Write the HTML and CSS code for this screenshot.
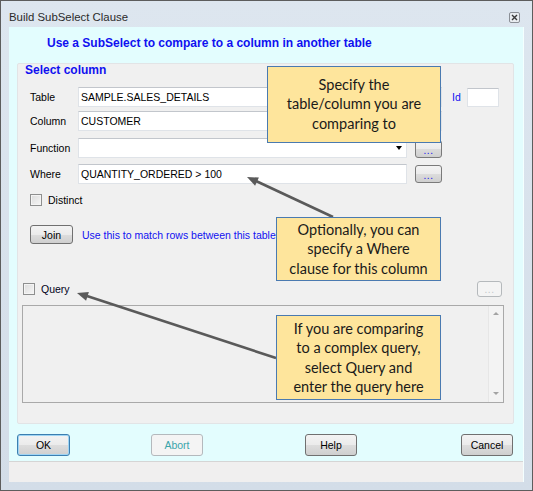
FILE: index.html
```html
<!DOCTYPE html>
<html>
<head>
<meta charset="utf-8">
<title>Build SubSelect Clause</title>
<link rel="stylesheet" href="styles.css">
</head>
<body>
<div class="window">
  <div class="titlebar">
    <span class="title">Build SubSelect Clause</span>
    <span class="close">
      <svg width="11" height="11" viewBox="0 0 11 11">
        <rect x="0.5" y="0.5" width="10" height="10" rx="1.5" fill="#e9edf1" stroke="#8a8f96"/>
        <path d="M3 3 L8 8 M8 3 L3 8" stroke="#3a3a3a" stroke-width="1.4"/>
      </svg>
    </span>
  </div>
  <div class="client">
    <div class="heading">Use a SubSelect to compare to a column in another table</div>
    <div class="panel">
      <div class="legend">Select column</div>
      <div class="row r-table">
        <span class="lbl">Table</span>
        <div class="field wide">SAMPLE.SALES_DETAILS</div>
        <span class="lbl-id">Id</span>
        <div class="field idf"></div>
      </div>
      <div class="row r-column">
        <span class="lbl">Column</span>
        <div class="field wide">CUSTOMER</div>
      </div>
      <div class="row r-function">
        <span class="lbl">Function</span>
        <div class="field combo"><span class="dd"></span></div>
        <div class="dots fdots">...</div>
      </div>
      <div class="row r-where">
        <span class="lbl">Where</span>
        <div class="field narrow">QUANTITY_ORDERED &gt; 100</div>
        <div class="dots">...</div>
      </div>
      <div class="row r-distinct">
        <span class="chk"></span><span class="chklbl">Distinct</span>
      </div>
      <div class="row r-join">
        <div class="btn join">Join</div>
        <span class="hint">Use this to match rows between this table</span>
      </div>
      <div class="row r-query">
        <span class="chk"></span><span class="chklbl">Query</span>
        <div class="dots qdots">...</div>
      </div>
      <div class="querybox">
        <div class="qarea"></div>
        <div class="vscroll"><span class="arr up"></span><span class="arr down"></span></div>
      </div>
    </div>
    <div class="buttons">
      <div class="btn ok">OK</div>
      <div class="btn abort">Abort</div>
      <div class="btn help">Help</div>
      <div class="btn cancel">Cancel</div>
    </div>
    <div class="status"></div>
  </div>

  <svg class="arrows" width="533" height="491" viewBox="0 0 533 491">
    <line x1="333" y1="217" x2="256" y2="181" stroke="#5a5a5a" stroke-width="2.6"/>
    <polygon points="247,177 255.1,185.7 258.9,177.5" fill="#5a5a5a"/>
    <line x1="276" y1="358" x2="87" y2="296" stroke="#5a5a5a" stroke-width="2.6"/>
    <polygon points="77,293 86.1,300.7 88.9,292.1" fill="#5a5a5a"/>
  </svg>

  <div class="callout c1">Specify the<br>table/column you are<br>comparing to</div>
  <div class="callout c2">Optionally, you can<br>specify a Where<br>clause for this column</div>
  <div class="callout c3">If you are comparing<br>to a complex query,<br>select Query and<br>enter the query here</div>
</div>
</body>
</html>
```

FILE: styles.css
```css
html, body {
  margin: 0;
  padding: 0;
  background: #ffffff;
}

body {
  font-family: "Liberation Sans", Arial, sans-serif;
  font-size: 10.5px;
  color: #000;
}

.window {
  position: relative;
  width: 533px;
  height: 491px;
  box-sizing: border-box;
  border: 1px solid #5d5d5d;
  background: linear-gradient(#dde6ef, #d3dde8);
  display: flex;
  flex-direction: column;
  overflow: hidden;
}

.titlebar {
  height: 26px;
  display: flex;
  align-items: center;
  justify-content: space-between;
  padding: 0 12px 0 8px;
  flex: none;
}

.title {
  font-size: 11.4px;
  color: #2b2b2b;
  line-height: 14px;
  margin-top: 5px;
}

.close {
  display: flex;
  margin-top: 7px;
}

.client {
  flex: none;
  height: 455px;
  margin: 0 9px 0 8px;
  background: #e3fdfe;
  display: flex;
  flex-direction: column;
  box-shadow: 1px 0 0 #f4ffff;
}

.heading {
  height: 36px;
  box-sizing: border-box;
  padding: 9px 0 0 38px;
  font-weight: bold;
  font-size: 12px;
  line-height: 14px;
  color: #1010f0;
}

.panel {
  height: 361px;
  box-sizing: border-box;
  margin: 0 9px 0 8px;
  background: #f0f0f0;
  border: 1px solid #e2e4e6;
  border-radius: 2px;
  display: flex;
  flex-direction: column;
}

.legend {
  height: 13px;
  line-height: 13px;
  margin-left: 7px;
  font-weight: bold;
  font-size: 12px;
  color: #1010f0;
}

.row {
  display: flex;
  align-items: center;
  padding-left: 12px;
}

.lbl {
  width: 48px;
  flex: none;
}

.field {
  box-sizing: border-box;
  height: 20px;
  background: #ffffff;
  border: 1px solid #dfe3e8;
  border-top-color: #c2c6cc;
  padding-left: 2px;
  line-height: 18px;
  white-space: nowrap;
  position: relative;
}

.wide { width: 364px; }
.narrow, .combo { width: 329px; }

.r-table { margin-top: 10px; height: 20px; }
.r-column { margin-top: 4px; height: 20px; }
.r-function { margin-top: 7px; height: 20px; }
.r-where { margin-top: 6px; height: 20px; }

.lbl-id {
  margin-left: 10px;
  color: #1010f0;
}

.idf {
  margin-left: 6px;
  width: 32px;
  height: 19px;
}

.dd {
  position: absolute;
  right: 4px;
  top: 7px;
  width: 0;
  height: 0;
  border-left: 3.5px solid transparent;
  border-right: 3.5px solid transparent;
  border-top: 4px solid #000;
}

.dots {
  box-sizing: border-box;
  width: 27px;
  height: 18px;
  margin-left: 8px;
  border: 1px solid #7a7a7a;
  border-radius: 3px;
  background: linear-gradient(#f3f3f3 0%, #ebebeb 50%, #dcdcdc 51%, #cfcfcf 100%);
  color: #1010f0;
  font-size: 10px;
  display: flex;
  justify-content: center;
  align-items: flex-end;
  line-height: 10px;
  padding-bottom: 1px;
  letter-spacing: 0.5px;
}

.fdots { align-self: flex-end; }

.r-distinct { margin-top: 10px; height: 12px; }

.chk {
  box-sizing: border-box;
  width: 12px;
  height: 12px;
  flex: none;
  border: 1px solid #8e8f8f;
  background: linear-gradient(135deg, #dcdcdc, #f6f6f6);
  box-shadow: inset 0 0 0 1px #f4f4f4;
}

.chklbl { margin-left: 6px; }

.r-join { margin-top: 19px; height: 19px; }

.btn {
  box-sizing: border-box;
  border: 1px solid #707070;
  border-radius: 3px;
  background: linear-gradient(#f3f3f3 0%, #ebebeb 50%, #dddddd 51%, #cfcfcf 100%);
  display: flex;
  align-items: center;
  justify-content: center;
  color: #000;
}

.join {
  width: 43px;
  height: 19px;
}

.hint {
  margin-left: 9px;
  color: #1010f0;
  white-space: nowrap;
}

.r-query {
  margin-top: 37px;
  height: 16px;
  padding-left: 5px;
}

.r-query .chklbl { color: #000020; }

.qdots {
  margin-left: auto;
  margin-right: 11px;
  width: 25px;
  height: 16px;
  border-color: #b5b9bc;
  background: #f4f4f4;
  color: #c2c6ca;
}

.querybox {
  box-sizing: border-box;
  margin: 8px 9px 0 4px;
  height: 98px;
  border: 1px solid #a9a9a9;
  display: flex;
  background: #f0f0f0;
}

.qarea { flex: 1; }

.vscroll {
  width: 14px;
  border-left: 1px solid #e6e6e6;
  background: #f3f3f3;
  display: flex;
  flex-direction: column;
  justify-content: space-between;
  align-items: center;
  padding: 6px 0 7px;
}

.arr {
  width: 0;
  height: 0;
  border-left: 3px solid transparent;
  border-right: 3px solid transparent;
}

.up { border-bottom: 3px solid #a3a3a3; }
.down { border-top: 3px solid #a3a3a3; }

.buttons {
  height: 37px;
  box-sizing: border-box;
  padding-top: 10px;
  display: flex;
  align-items: flex-start;
}

.buttons .btn {
  height: 22px;
  width: 52px;
}

.ok {
  margin-left: 8px;
  width: 53px !important;
  border-color: #3c7fb1 !important;
  box-shadow: inset 0 0 0 1px #9fd4f3;
}

.abort {
  margin-left: 81px;
  border-color: #b4b9bd !important;
  background: #f4f4f4 !important;
  color: #3aa5ab !important;
}

.help { margin-left: 102px; }
.cancel { margin-left: 104px; }

.status {
  height: 21px;
  box-sizing: border-box;
  background: #f0efef;
  border-top: 1px solid #d5d5d5;
}

.arrows {
  position: absolute;
  left: -1px;
  top: -1px;
}

.callout {
  position: absolute;
  box-sizing: border-box;
  background: #fee59c;
  border: 1px solid #4a7ab0;
  font-family: Lato, "Open Sans", sans-serif;
  font-size: 14.5px;
  line-height: 19.4px;
  color: #1a1a1a;
  text-align: center;
  display: flex;
  align-items: center;
  justify-content: center;
}

.c1 { left: 266px; top: 65px; width: 174px; height: 77px; padding-bottom: 1px; }
.c2 { left: 275px; top: 216px; width: 165px; height: 64px; }
.c3 { left: 275px; top: 314px; width: 165px; height: 85px; }
```
